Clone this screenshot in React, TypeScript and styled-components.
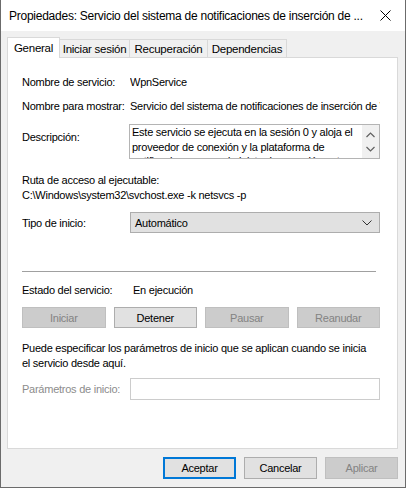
import React from "react";
import styled, { createGlobalStyle } from "styled-components";

const GlobalStyle = createGlobalStyle`
  html, body {
    margin: 0;
    padding: 0;
    background: #ffffff;
  }
  body {
    font-family: "Liberation Sans", Arial, sans-serif;
    font-size: 11px;
    letter-spacing: -0.25px;
    color: #000;
  }
  * {
    box-sizing: border-box;
  }
`;

const tabs = [
  { label: "General", width: 53, active: true },
  { label: "Iniciar sesión", width: 71 },
  { label: "Recuperación", width: 79 },
  { label: "Dependencias", width: 80 },
];

const controlButtons = [
  { label: "Iniciar", disabled: true },
  { label: "Detener" },
  { label: "Pausar", disabled: true },
  { label: "Reanudar", disabled: true },
];

function Chevron({ up }: { up?: boolean }) {
  return (
    <svg width="9" height="6" viewBox="0 0 9 6">
      <polyline
        points={up ? "0.5,5 4.5,1 8.5,5" : "0.5,1 4.5,5 8.5,1"}
        fill="none"
        stroke="#606060"
        strokeWidth="1.2"
      />
    </svg>
  );
}

function App() {
  return (
    <>
      <GlobalStyle />
      <Window>
        <TitleBar>
          <Title>Propiedades: Servicio del sistema de notificaciones de inserción de ...</Title>
          <CloseButton>
            <svg width="11" height="11" viewBox="0 0 11 11">
              <line x1="0.5" y1="0.5" x2="10.5" y2="10.5" stroke="#000" strokeWidth="1" />
              <line x1="10.5" y1="0.5" x2="0.5" y2="10.5" stroke="#000" strokeWidth="1" />
            </svg>
          </CloseButton>
        </TitleBar>
        <Body>
          <TabStrip>
            {tabs.map((t) => (
              <Tab key={t.label} $active={t.active} $width={t.width}>
                {t.label}
              </Tab>
            ))}
          </TabStrip>
          <Panel>
            <InfoRow>
              <Label>Nombre de servicio:</Label>
              <Value>WpnService</Value>
            </InfoRow>
            <InfoRow $gap={9}>
              <Label>Nombre para mostrar:</Label>
              <Value>Servicio del sistema de notificaciones de inserción de Windows</Value>
            </InfoRow>
            <DescRow>
              <DescLabel>Descripción:</DescLabel>
              <DescBox>
                <DescText>
                  <span>Este servicio se ejecuta en la sesión 0 y aloja el</span>
                  <span>proveedor de conexión y la plataforma de</span>
                  <span>notificaciones que administra la conexión entre</span>
                </DescText>
                <ScrollBar>
                  <Chevron up />
                  <Chevron />
                </ScrollBar>
              </DescBox>
            </DescRow>
            <Block>
              <Line>Ruta de acceso al ejecutable:</Line>
              <Line>C:\Windows\system32\svchost.exe -k netsvcs -p</Line>
            </Block>
            <FieldRow $gap={9}>
              <Label>Tipo de inicio:</Label>
              <Select>
                <span>Automático</span>
                <svg width="10" height="6" viewBox="0 0 10 6">
                  <polyline points="0.5,0.5 5,5 9.5,0.5" fill="none" stroke="#333" strokeWidth="1" />
                </svg>
              </Select>
            </FieldRow>
            <Separator />
            <InfoRow $gap={11}>
              <Label>Estado del servicio:</Label>
              <StatusValue>En ejecución</StatusValue>
            </InfoRow>
            <ButtonRow>
              {controlButtons.map((b) => (
                <Button key={b.label} $disabled={b.disabled}>
                  {b.label}
                </Button>
              ))}
            </ButtonRow>
            <Paragraph>
              Puede especificar los parámetros de inicio que se aplican cuando se inicia
              <br />
              el servicio desde aquí.
            </Paragraph>
            <FieldRow $gap={7}>
              <Label $muted>Parámetros de inicio:</Label>
              <TextInput />
            </FieldRow>
          </Panel>
          <Footer>
            <FooterButton $primary>Aceptar</FooterButton>
            <FooterButton>Cancelar</FooterButton>
            <FooterButton $disabled>Aplicar</FooterButton>
          </Footer>
        </Body>
      </Window>
    </>
  );
}

export default App;

const Window = styled.div`
  width: 406px;
  height: 488px;
  display: flex;
  flex-direction: column;
  border-left: 1px solid #6b6b6b;
  border-right: 1px solid #6b6b6b;
  border-bottom: 1px solid #6b6b6b;
  background: #f0f0f0;
`;

const TitleBar = styled.div`
  height: 31px;
  background: #ffffff;
  display: flex;
  align-items: center;
  padding-left: 8px;
`;

const Title = styled.div`
  flex: 1;
  white-space: nowrap;
  overflow: hidden;
  font-size: 12px;
  letter-spacing: -0.25px;
  color: #000;
`;

const CloseButton = styled.div`
  width: 40px;
  height: 31px;
  display: flex;
  align-items: center;
  justify-content: center;
`;

const Body = styled.div`
  flex: 1;
  display: flex;
  flex-direction: column;
  padding: 7px 7px 0 6px;
`;

const TabStrip = styled.div`
  display: flex;
  align-items: flex-end;
  height: 20px;
  position: relative;
  z-index: 1;
  margin-bottom: -1px;
`;

const Tab = styled.div<{ $active?: boolean; $width: number }>`
  width: ${(p) => p.$width}px;
  height: ${(p) => (p.$active ? 21 : 19)}px;
  margin-left: ${(p) => (p.$active ? 0 : -1)}px;
  border: 1px solid #d9d9d9;
  border-bottom: ${(p) => (p.$active ? "none" : "1px solid #d9d9d9")};
  background: ${(p) => (p.$active ? "#ffffff" : "#f0f0f0")};
  display: flex;
  align-items: center;
  justify-content: center;
  padding-top: ${(p) => (p.$active ? 0 : 1)}px;
  white-space: nowrap;
  font-size: 11.5px;
  &:first-child {
    margin-left: 0;
  }
`;

const Panel = styled.div`
  height: 392px;
  background: #ffffff;
  border: 1px solid #d9d9d9;
  display: flex;
  flex-direction: column;
  padding: 17px 17px 0 14px;
`;

const InfoRow = styled.div<{ $gap?: number }>`
  display: grid;
  grid-template-columns: 108px 1fr;
  line-height: 15px;
  margin-top: ${(p) => p.$gap ?? 0}px;
`;

const Label = styled.div<{ $muted?: boolean }>`
  white-space: nowrap;
  color: ${(p) => (p.$muted ? "#8c8c8c" : "#000")};
`;

const Value = styled.div`
  white-space: nowrap;
  overflow: hidden;
`;

const StatusValue = styled.div`
  padding-left: 3px;
`;

const DescRow = styled.div`
  display: grid;
  grid-template-columns: 107px 1fr;
  margin-top: 10px;
`;

const DescLabel = styled.div`
  line-height: 15px;
  padding-top: 6px;
`;

const DescBox = styled.div`
  height: 35px;
  border: 1px solid #b4b4b4;
  display: flex;
  overflow: hidden;
`;

const DescText = styled.div`
  flex: 1;
  display: flex;
  flex-direction: column;
  padding: 0 0 0 2px;
  line-height: 14.5px;
  white-space: nowrap;
  overflow: hidden;
`;

const ScrollBar = styled.div`
  width: 17px;
  background: #f0f0f0;
  display: flex;
  flex-direction: column;
  align-items: center;
  justify-content: space-between;
  padding: 7px 0 6px;
`;

const Block = styled.div`
  margin-top: 14px;
  line-height: 15px;
`;

const Line = styled.div`
  white-space: nowrap;
`;

const FieldRow = styled.div<{ $gap: number }>`
  display: grid;
  grid-template-columns: 108px 1fr;
  align-items: center;
  margin-top: ${(p) => p.$gap}px;
`;

const Select = styled.div`
  height: 21px;
  background: #e1e1e1;
  border: 1px solid #adadad;
  display: flex;
  align-items: center;
  justify-content: space-between;
  padding: 0 7px 0 4px;
`;

const Separator = styled.div`
  height: 1px;
  background: #a0a0a0;
  margin: 38px 4px 0 0;
`;

const ButtonRow = styled.div`
  display: grid;
  grid-template-columns: repeat(4, 1fr);
  gap: 8px;
  margin-top: 9px;
`;

const Button = styled.div<{ $disabled?: boolean }>`
  height: 21px;
  display: flex;
  align-items: center;
  justify-content: center;
  background: ${(p) => (p.$disabled ? "#cccccc" : "#e1e1e1")};
  border: 1px solid ${(p) => (p.$disabled ? "#bfbfbf" : "#adadad")};
  color: ${(p) => (p.$disabled ? "#838383" : "#000")};
`;

const Paragraph = styled.div`
  margin-top: 13px;
  line-height: 15px;
  white-space: nowrap;
`;

const TextInput = styled.div`
  height: 22px;
  background: #ffffff;
  border: 1px solid #cccccc;
`;

const Footer = styled.div`
  display: flex;
  justify-content: flex-end;
  gap: 8px;
  padding-top: 8px;
`;

const FooterButton = styled.div<{ $primary?: boolean; $disabled?: boolean }>`
  width: 73px;
  height: 22px;
  display: flex;
  align-items: center;
  justify-content: center;
  background: ${(p) => (p.$disabled ? "#cccccc" : "#e1e1e1")};
  border: ${(p) =>
    p.$primary ? "2px solid #0078d7" : p.$disabled ? "1px solid #bfbfbf" : "1px solid #adadad"};
  color: ${(p) => (p.$disabled ? "#838383" : "#000")};
`;
